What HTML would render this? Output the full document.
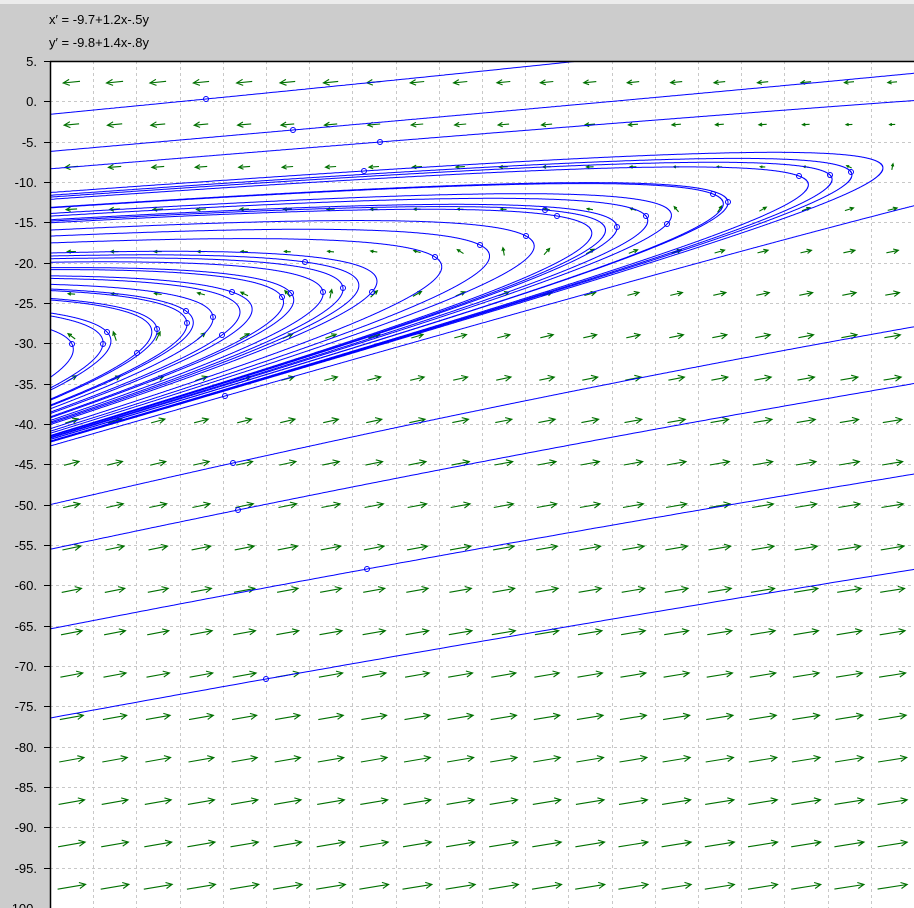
<!DOCTYPE html>
<html><head><meta charset="utf-8"><style>
html,body{margin:0;padding:0;background:#cccccc;}
body{width:914px;height:908px;overflow:hidden;position:relative;font-family:"Liberation Sans",sans-serif;}
#top{position:absolute;left:0;top:0;width:914px;height:4px;background:#ececec;}
.eq{position:absolute;left:49px;font-size:13px;color:#000;}
svg{position:absolute;left:0;top:0;}
</style></head><body>
<div id="top"></div>
<div class="eq" style="top:12px">x&#8242; = -9.7+1.2x-.5y</div>
<div class="eq" style="top:35px">y&#8242; = -9.8+1.4x-.8y</div>
<svg id="s" width="914" height="908" xmlns="http://www.w3.org/2000/svg"></svg>
<script>
(function(){
var L=50,T=61,R=914,B=908,sx=86.4,sy=8.067;
function px(x){return L+(x+5)*sx;}
function py(y){return T+(5-y)*sy;}
function dx(u){return -5+(u-L)/sx;}
function dy(v){return 5-(v-T)/sy;}
function f(x,y){return [-9.7+1.2*x-0.5*y,-9.8+1.4*x-0.8*y];}
var h=[];
h.push('<rect x="50" y="61" width="864" height="847" fill="#fff"/>');
h.push('<defs><clipPath id="c"><rect x="50" y="61" width="864" height="847"/></clipPath></defs>');
var g='';
for(var i=1;i<20;i++){var u=Math.round(L+i*43.2)+0.5;g+='M'+u+' 61V908';}
for(var j=1;j<21;j++){var v=Math.round(T+j*40.33)+0.5;g+='M50 '+v+'H914';}
h.push('<path d="'+g+'" stroke="#c8c8c8" stroke-width="1" stroke-dasharray="3,3" fill="none"/>');
var lab='';
for(var j=0;j<=21;j++){var v=Math.round(T+j*40.33);var val=5-5*j;
 lab+='<text x="37" y="'+(v+5)+'" text-anchor="end" font-family="Liberation Sans, sans-serif" font-size="13" fill="#000">'+val+'.</text>';
 lab+='<path d="M44 '+(v+0.5)+'H50" stroke="#000"/>';}
h.push(lab);
var a='';
var rs=847/20;
for(var i=0;i<20;i++)for(var j=0;j<20;j++){
 var cu=L+43.2*(i+0.5),cv=T+rs*(j+0.5);
 var x=dx(cu),y=dy(cv),d=f(x,y);
 var m=Math.sqrt(d[0]*d[0]+d[1]*d[1]);
 var pu=d[0]*sx,pv=-d[1]*sy,pm=Math.sqrt(pu*pu+pv*pv);
 if(pm<1e-9)continue;
 var ux=pu/pm,uy=pv/pm;
 var len=Math.min(30,3.4*Math.sqrt(m));
 var x0=cu-ux*len/2,y0=cv-uy*len/2,x1=cu+ux*len/2,y1=cv+uy*len/2;
 var hl=Math.min(7,len*0.45),ca=Math.cos(0.45),sa=Math.sin(0.45);
 var h1x=x1-hl*(ux*ca-uy*sa),h1y=y1-hl*(uy*ca+ux*sa);
 var h2x=x1-hl*(ux*ca+uy*sa),h2y=y1-hl*(uy*ca-ux*sa);
 a+='M'+x0.toFixed(1)+' '+y0.toFixed(1)+'L'+x1.toFixed(1)+' '+y1.toFixed(1)+'M'+h1x.toFixed(1)+' '+h1y.toFixed(1)+'L'+x1.toFixed(1)+' '+y1.toFixed(1)+'L'+h2x.toFixed(1)+' '+h2y.toFixed(1);
}
h.push('<path d="'+a+'" stroke="#007000" stroke-width="1.1" fill="none" clip-path="url(#c)"/>');
var seeds=[[206,99],[293,130],[380,142],[364,171],[435,257],[480,245],[526,236],[557,216],[545,210],
[305,262],[232,292],[282,297],[291,293],[323,292],[343,288],[372,292],[186,311],[187,323],[213,317],[157,329],[107,332],[103,344],[72,344],[137,353],[222,335],[225,396],
[799,176],[830,175],[851,172],[713,194],[728,202],[646,216],[617,227],[667,224],
[233,463],[238,510],[367,569],[266,679]];
function rk(x,y,dt){var k1=f(x,y),k2=f(x+dt/2*k1[0],y+dt/2*k1[1]),k3=f(x+dt/2*k2[0],y+dt/2*k2[1]),k4=f(x+dt*k3[0],y+dt*k3[1]);
 return [x+dt/6*(k1[0]+2*k2[0]+2*k3[0]+k4[0]),y+dt/6*(k1[1]+2*k2[1]+2*k3[1]+k4[1])];}
var tr='',cir='';
seeds.forEach(function(s){
 var x0=dx(s[0]),y0=dy(s[1]);
 [1,-1].forEach(function(dir){
  var p=[x0,y0],pts=[px(p[0]).toFixed(1)+','+py(p[1]).toFixed(1)];
  for(var k=0;k<8000;k++){
   p=rk(p[0],p[1],dir*0.002);
   pts.push(px(p[0]).toFixed(1)+','+py(p[1]).toFixed(1));
   if(p[0]<-5.3||p[0]>5.3||p[1]<-102||p[1]>8)break;
  }
  tr+='<polyline points="'+pts.join(' ')+'"/>';
 });
 cir+='<circle cx="'+s[0]+'" cy="'+s[1]+'" r="2.5"/>';
});
h.push('<g stroke="#0000ff" stroke-width="1" fill="none" clip-path="url(#c)">'+tr+cir+'</g>');
h.push('<path d="M50.5 61V908M50 61.5H914" stroke="#000" stroke-width="1.5"/>');
document.getElementById('s').innerHTML=h.join('');
})();
</script>
</body></html>
